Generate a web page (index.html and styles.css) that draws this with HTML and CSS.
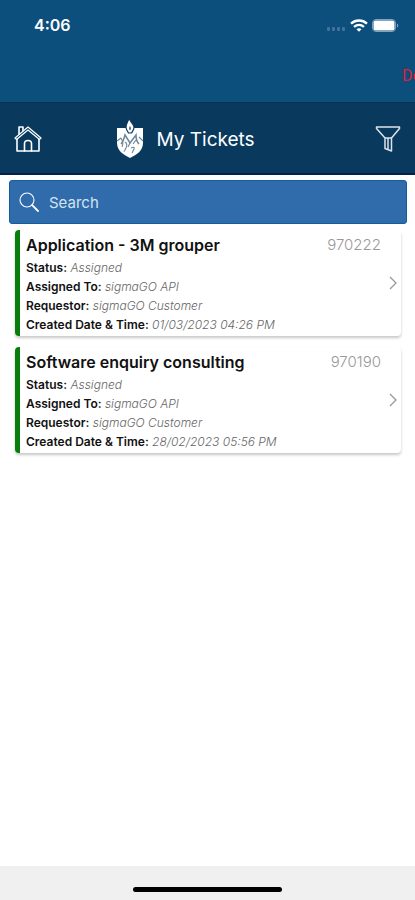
FILE: index.html
```
<!DOCTYPE html>
<html lang="en">
<head>
	<meta charset="UTF-8">
	<meta name="viewport" content="width=device-width, initial-scale=1">
	<title>My Tickets</title>
	<link rel="stylesheet" href="styles.css">
</head>
<body>
<div class="top">
	<div class="status">
		<span class="time">4:06</span>
		<div class="indicators">
			<svg class="dots" width="19" height="4" viewBox="0 0 19 4" fill="#3f729c">
				<rect x="0" y="0" width="3" height="4" rx="1"/>
				<rect x="5" y="0" width="3" height="4" rx="1"/>
				<rect x="10" y="0" width="3" height="4" rx="1"/>
				<rect x="15" y="0" width="3" height="4" rx="1"/>
			</svg>
			<svg width="18" height="13" viewBox="0 0 18 13" fill="none" stroke="#fff">
				<path d="M1 4.7C5.5 .5 12.5 .5 17 4.7" stroke-width="2.4"/>
				<path d="M4 7.9C7 5.3 11 5.3 14 7.9" stroke-width="2.2"/>
				<path d="M6.5 10.2C8 9 10 9 11.5 10.2L9 12.7Z" fill="#fff" stroke="none"/>
			</svg>
			<svg width="27" height="13" viewBox="0 0 27 13">
				<rect x=".5" y=".5" width="23" height="12" rx="3.5" fill="none" stroke="#7fa3c1"/>
				<rect x="1.5" y="1.5" width="21" height="10" rx="2" fill="#fff"/>
				<path d="M25 4.5C26.7 5 26.7 8 25 8.5Z" fill="#7fa3c1"/>
			</svg>
		</div>
	</div>
	<div class="ticker">De</div>
</div>

<header class="bar">
	<button class="icon" type="button" aria-label="Home">
		<svg width="28" height="28" viewBox="0 0 28 28" fill="none" stroke="#fff" stroke-width="1.6" stroke-linejoin="round" stroke-linecap="round">
			<path d="M3 14V26H25V14"/>
			<path d="M1 13L14 2L27 13L25.5 14.5L14 5L2.5 14.5Z" stroke-width="1.2"/>
			<path d="M5 9V2H9V5.5"/>
			<path d="M10.5 26V18.5C10.5 14.5 17.5 14.5 17.5 18.5V26"/>
		</svg>
	</button>
	<div class="brand">
		<svg width="28" height="42" viewBox="0 0 28 42">
			<path d="M1 10H27V25C27 33 20 37 14 40C8 37 1 33 1 25Z" fill="#fff"/>
			<path d="M13 0C14 4 18 6 18 9.5C18 12 16.5 13 15.5 15H12.5C11.5 13 10 12 10 9C10 6 12 4 13 0Z" fill="#fff" stroke="#093a5e" stroke-width="1.2"/>
			<path d="M14 8C15 9.5 15 11 14 12.5C13 11 13 9.5 14 8Z" fill="#093a5e"/>
			<g fill="none" stroke="#6b8599" stroke-width="1.1">
				<path d="M1 23L5 20M23 19L27 23"/>
				<path d="M5 26C7 24 8 21 9 17L14 25L20 17C20 21 21 24 23 26" stroke-width="1.5"/>
				<path d="M5 20Q8 25 6 29M9 24Q12 26 10 30T8 33M14 25L12 29"/>
				<path d="M15 30Q19 28 18 31L16 35M20 22L17 26"/>
			</g>
		</svg>
		<h1>My Tickets</h1>
	</div>
	<button class="icon" type="button" aria-label="Filter">
		<svg width="26" height="28" viewBox="0 0 26 28" fill="none" stroke="#dde3ea" stroke-width="1.5" stroke-linejoin="round">
			<path d="M1.5 2H24.5V3.5L16.5 13V26L10 23.5V13L1.5 3.5Z"/>
			<path d="M10 13H16.5M13 13V24"/>
		</svg>
	</button>
</header>

<main>
	<label class="search">
		<svg width="20" height="20" viewBox="0 0 20 20" fill="none" stroke="#fff" stroke-linecap="round">
			<circle cx="8" cy="8" r="7" stroke-width="1.1"/>
			<path d="M13.2 13.2L19 19" stroke-width="1.8"/>
		</svg>
		<input type="text" placeholder="Search" aria-label="Search">
	</label>

	<div class="tickets">
		<a class="ticket" href="#970222">
			<div class="info">
				<div class="head"><h2>Application - 3M grouper</h2><span class="number">970222</span></div>
				<p><b>Status:</b> <i>Assigned</i></p>
				<p><b>Assigned To:</b> <i>sigmaGO API</i></p>
				<p><b>Requestor:</b> <i>sigmaGO Customer</i></p>
				<p><b>Created Date &amp; Time:</b> <i>01/03/2023 04:26 PM</i></p>
			</div>
			<svg class="arrow" width="8" height="14" viewBox="0 0 8 14" fill="none" stroke="#999" stroke-width="1.3">
				<path d="M1 1L7 7L1 13"/>
			</svg>
		</a>
		<a class="ticket" href="#970190">
			<div class="info">
				<div class="head"><h2>Software enquiry consulting</h2><span class="number">970190</span></div>
				<p><b>Status:</b> <i>Assigned</i></p>
				<p><b>Assigned To:</b> <i>sigmaGO API</i></p>
				<p><b>Requestor:</b> <i>sigmaGO Customer</i></p>
				<p><b>Created Date &amp; Time:</b> <i>28/02/2023 05:56 PM</i></p>
			</div>
			<svg class="arrow" width="8" height="14" viewBox="0 0 8 14" fill="none" stroke="#999" stroke-width="1.3">
				<path d="M1 1L7 7L1 13"/>
			</svg>
		</a>
	</div>
</main>

<footer><div class="home-line"></div></footer>
</body>
</html>
```
FILE: styles.css
```
* {
	box-sizing: border-box;
}
body {
	margin: 0;
	min-height: 100vh;
	display: flex;
	flex-direction: column;
	background: #fff;
	font-family: Inter, "Liberation Sans", sans-serif;
	color: #111;
}
h1, h2, p {
	margin: 0;
}

/* status bar and ticker */
.top {
	background: #0c4e7c;
	color: #fff;
}
.status {
	height: 50px;
	padding: 0 16px 0 34px;
	display: flex;
	align-items: center;
	justify-content: space-between;
}
.time {
	font-size: 16px;
	font-weight: 600;
}
.indicators {
	display: flex;
	align-items: center;
	gap: 4px;
}
.dots {
	margin-top: 8px;
}
.ticker {
	height: 52px;
	width: 13px;
	margin-left: auto;
	overflow: hidden;
	font-family: Roboto, sans-serif;
	font-size: 16px;
	font-weight: 400;
	line-height: 52px;
	color: #dc1f3c;
}

/* title bar */
.bar {
	height: 73px;
	padding: 2px 14px 0;
	display: flex;
	align-items: center;
	background: #093a5e;
	border-top: 1px solid #073353;
	border-bottom: 2px solid #06204d;
}
.icon {
	padding: 0;
	border: 0;
	background: none;
	display: flex;
}
.brand {
	flex: 1;
	padding-left: 19%;
	display: flex;
	align-items: center;
	gap: 13px;
	color: #fff;
}
.brand h1 {
	font-size: 19px;
	font-weight: 400;
}

/* list */
main {
	flex: 1;
	padding: 5px 8px 5px 9px;
}
.search {
	height: 44px;
	padding: 0 9px;
	display: flex;
	align-items: center;
	gap: 10px;
	background: #306cac;
	border: 1px solid #125da0;
	border-radius: 3px;
}
.search input {
	flex: 1;
	min-width: 0;
	padding: 0;
	border: 0;
	outline: 0;
	background: none;
	font: 15px Inter, sans-serif;
	color: #fff;
}
.search input::placeholder {
	color: #d5e3f2;
	opacity: 1;
}
.tickets {
	padding: 6px 6px 0 6px;
	display: flex;
	flex-direction: column;
	gap: 11px;
}
.ticket {
	padding: 2px 4px 2px 6px;
	display: flex;
	align-items: center;
	background: #fff;
	border-left: 5px solid #087d0c;
	border-radius: 4px;
	box-shadow: 0 2px 3px rgba(0, 0, 0, 0.22);
	color: inherit;
	text-decoration: none;
}
.info {
	flex: 1;
}
.head {
	padding-right: 8px;
	display: flex;
	justify-content: space-between;
	line-height: 26px;
}
.head h2 {
	font-size: 16px;
	font-weight: 600;
}
.number {
	font-size: 15px;
	font-weight: 300;
	color: #999;
}
.info p {
	font-size: 12px;
	line-height: 19px;
}
.info b {
	font-weight: 600;
}
.info i {
	font-weight: 300;
	color: #666;
}

footer {
	height: 34px;
	padding-top: 21px;
	background: #f0f0f0;
}
.home-line {
	width: 36%;
	height: 5px;
	margin: 0 auto;
	background: #000;
	border-radius: 3px;
}
```
